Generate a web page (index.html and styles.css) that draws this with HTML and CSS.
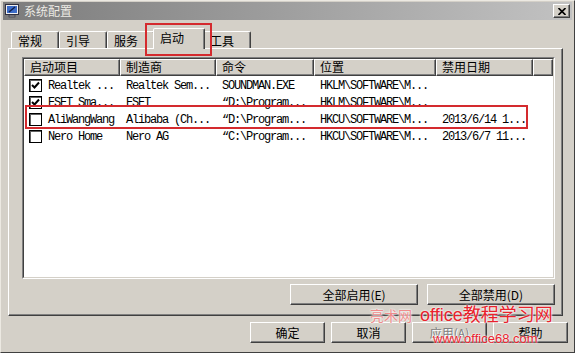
FILE: index.html
```html
<!DOCTYPE html>
<html lang="zh">
<head>
    <meta charset="UTF-8">
    <title>系统配置</title>
    <link rel="stylesheet" href="styles.css">
</head>
<body>
<div class="window">
    <div class="titlebar">
        <svg class="app-icon" width="16" height="16" viewBox="0 0 16 16">
            <rect x="1.5" y="1.5" width="13" height="10" fill="#f0f0f0" stroke="#303040"/>
            <rect x="3" y="3" width="10" height="7" fill="#3c6cc8"/>
            <path d="M5 9 L11 4" stroke="#10204a" stroke-width="1.5"/>
            <rect x="5" y="12" width="6" height="2" fill="#909090" stroke="#303040" stroke-width="0.6"/>
        </svg>
        <span class="title">系统配置</span>
        <span class="close">
            <svg width="8" height="7" viewBox="0 0 8 7"><path d="M0.5 0 L7.5 7 M7.5 0 L0.5 7" stroke="#000" stroke-width="1.6"/></svg>
        </span>
    </div>

    <div class="tabs">
        <div class="tab">常规</div>
        <div class="tab">引导</div>
        <div class="tab">服务</div>
        <div class="tab active">启动</div>
        <div class="tab">工具</div>
    </div>

    <div class="panel">
        <div class="listview">
            <div class="lv-frame">
                <div class="lv-head">
                    <div class="hcell c1">启动项目</div>
                    <div class="hcell c2">制造商</div>
                    <div class="hcell c3">命令</div>
                    <div class="hcell c4">位置</div>
                    <div class="hcell c5">禁用日期</div>
                    <div class="hcell c6"></div>
                </div>
                <div class="lv-body">
                    <div class="lv-row">
                        <div class="cell c1"><span class="chk"><svg width="9" height="9" viewBox="0 0 9 9"><path d="M1 4 L3.5 6.5 L8 1.5" fill="none" stroke="#000" stroke-width="2"/></svg></span>Realtek ...</div>
                        <div class="cell c2">Realtek Sem...</div>
                        <div class="cell c3">SOUNDMAN.EXE</div>
                        <div class="cell c4">HKLM\SOFTWARE\M...</div>
                        <div class="cell c5"></div>
                    </div>
                    <div class="lv-row">
                        <div class="cell c1"><span class="chk"><svg width="9" height="9" viewBox="0 0 9 9"><path d="M1 4 L3.5 6.5 L8 1.5" fill="none" stroke="#000" stroke-width="2"/></svg></span>ESET Sma...</div>
                        <div class="cell c2">ESET</div>
                        <div class="cell c3">“D:\Program...</div>
                        <div class="cell c4">HKLM\SOFTWARE\M...</div>
                        <div class="cell c5"></div>
                    </div>
                    <div class="lv-row">
                        <div class="cell c1"><span class="chk"></span>AliWangWang</div>
                        <div class="cell c2">Alibaba (Ch...</div>
                        <div class="cell c3">“D:\Program...</div>
                        <div class="cell c4">HKCU\SOFTWARE\M...</div>
                        <div class="cell c5">2013/6/14 1...</div>
                    </div>
                    <div class="lv-row">
                        <div class="cell c1"><span class="chk"></span>Nero Home</div>
                        <div class="cell c2">Nero AG</div>
                        <div class="cell c3">“C:\Program...</div>
                        <div class="cell c4">HKCU\SOFTWARE\M...</div>
                        <div class="cell c5">2013/6/7 11...</div>
                    </div>
                </div>
            </div>
        </div>
        <div class="panel-actions">
            <button class="btn wide">全部启用(E)</button>
            <button class="btn wide">全部禁用(D)</button>
        </div>
    </div>

    <div class="dialog-actions">
        <button class="btn">确定</button>
        <button class="btn">取消</button>
        <button class="btn disabled">应用(A)</button>
        <button class="btn">帮助</button>
    </div>

    <!-- 红色标注框 -->
    <div class="mark mark-tab"></div>
    <div class="mark mark-row"></div>

    <!-- 水印 -->
    <div class="watermark">
        <div class="wm-line1"><span class="wm-faint">亮术网</span><span>office教程学习网</span></div>
        <div class="wm-line2">www.office68.com</div>
    </div>
</div>
</body>
</html>
```

FILE: styles.css
```css
* { box-sizing: border-box; }
body { margin: 0; background: #d4d0c8; font-family: "Noto Sans CJK SC", sans-serif; font-size: 12px; color: #000; }

.window { position: relative; width: 575px; height: 353px; background: #d4d0c8; border: 1px solid; border-color: #ece9e2 #404040 #404040 #ece9e2; padding: 1px 2px 0 2px; overflow: hidden; }

.titlebar { height: 18px; display: flex; align-items: center; background: linear-gradient(to right, #7c7c7c, #c2c2c2); }
.app-icon { margin-left: 1px; flex: none; }
.title { margin-left: 4px; color: #eceae4; font-size: 12px; line-height: 14px; flex: 1; }
.close { width: 17px; height: 14px; margin-right: 2px; display: flex; align-items: center; justify-content: center; background: #d4d0c8; border: 1px solid; border-color: #fff #404040 #404040 #fff; box-shadow: inset -1px -1px #808080; }

.tabs { display: flex; align-items: flex-end; height: 20px; margin-top: 8px; padding-left: 8px; }
.tab { width: 48px; height: 17px; padding: 2px 0 0 6px; line-height: 14px; font-size: 12px; border: 1px solid; border-bottom: none; border-color: #fff #404040 transparent #fff; border-radius: 2px 2px 0 0; box-shadow: inset -1px 0 #808080; background: #d4d0c8; }
.tab.active { position: relative; z-index: 1; width: 52px; height: 21px; margin: 0 -2px -1px; }

.panel { width: 555px; height: 268px; margin-left: 5px; padding: 8px 7px 0 13px; border: 1px solid; border-color: #fff #404040 #404040 #fff; box-shadow: inset -1px -1px #808080; }

.listview { height: 222px; border: 1px solid; border-color: #808080 #fff #fff #808080; }
.lv-frame { height: 100%; background: #fff; border: 1px solid; border-color: #404040 #d4d0c8 #d4d0c8 #404040; }

.lv-head { display: flex; height: 17px; background: #d4d0c8; }
.hcell { padding-left: 5px; line-height: 14px; white-space: nowrap; border: 1px solid; border-color: #fff #404040 #404040 #fff; box-shadow: inset -1px -1px #808080; }

.c1 { width: 96px; }
.c2 { width: 96px; }
.c3 { width: 98px; }
.c4 { width: 122px; }
.c5 { width: 97px; }
.c6 { flex: 1; }

.lv-body { padding-top: 1px; }
.lv-row { display: flex; height: 17px; }
.cell { display: flex; align-items: center; padding-left: 6px; white-space: nowrap; overflow: hidden; font-family: "Liberation Mono", "Noto Sans CJK SC", monospace; font-size: 12px; letter-spacing: -1.2px; color: #000; }
.cell.c1 { padding-left: 5px; }
.chk { width: 13px; height: 13px; margin-right: 6px; flex: none; display: flex; align-items: center; justify-content: center; background: #fff; border: 1px solid #000; box-shadow: inset 1px 1px #606060; }

.panel-actions { display: flex; justify-content: flex-end; gap: 9px; margin-top: 5px; }
.dialog-actions { display: flex; justify-content: flex-end; gap: 6px; margin-top: 6px; padding-right: 4px; }

.btn { width: 75px; height: 21px; padding: 0; font-family: "Noto Sans CJK SC", sans-serif; font-size: 12px; color: #000; background: #d4d0c8; border: 1px solid; border-color: #fff #404040 #404040 #fff; box-shadow: inset -1px -1px #808080; }
.btn.wide { width: 128px; }
.btn.disabled { color: #808080; text-shadow: 1px 1px #fff; }

.mark { position: absolute; border: 2px solid #d42a2e; }
.mark-tab { left: 144px; top: 22px; width: 67px; height: 33px; }
.mark-row { left: 24px; top: 104px; width: 503px; height: 24px; }

.watermark { position: absolute; left: 369px; top: 303px; color: #e8222c; font-family: "Liberation Sans", "Noto Sans CJK SC", sans-serif; pointer-events: none; white-space: nowrap; }
.wm-line1 { display: flex; align-items: baseline; font-size: 18px; line-height: 22px; text-shadow: 0 0 2px #fff, 0 0 2px #fff; }
.wm-faint { width: 50px; font-size: 14px; color: #ef8c8c; }
.wm-line2 { margin: 3px 0 0 63px; font-size: 13px; line-height: 18px; text-shadow: 0 0 2px #fff, 0 0 2px #fff; }
```
